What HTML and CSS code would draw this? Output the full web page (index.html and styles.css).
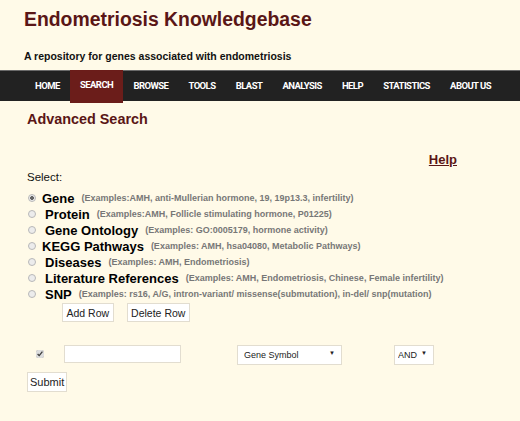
FILE: index.html
```html
<!DOCTYPE html>
<html lang="en">
<head>
    <meta charset="UTF-8">
    <title>Endometriosis Knowledgebase - Advanced Search</title>
    <link rel="stylesheet" href="styles.css">
</head>
<body>
    <!-- Header -->
    <header class="site-header">
        <h1>Endometriosis Knowledgebase</h1>
        <p class="tagline">A repository for genes associated with endometriosis</p>
    </header>

    <!-- Navbar -->
    <nav class="main-nav">
        <ul>
            <li><a href="#">HOME</a></li>
            <li class="active"><a href="#">SEARCH</a></li>
            <li><a href="#">BROWSE</a></li>
            <li><a href="#">TOOLS</a></li>
            <li><a href="#">BLAST</a></li>
            <li><a href="#">ANALYSIS</a></li>
            <li><a href="#">HELP</a></li>
            <li><a href="#">STATISTICS</a></li>
            <li><a href="#">ABOUT US</a></li>
        </ul>
    </nav>

    <!-- Advanced Search -->
    <main class="content">
        <h2>Advanced Search</h2>
        <div class="help-link"><a href="#">Help</a></div>
        <p class="select-label">Select:</p>

        <form class="search-form">
            <ul class="type-list">
                <li><input type="radio" name="type" checked><b>Gene</b><span class="ex">(Examples:AMH, anti-Mullerian hormone, 19, 19p13.3, infertility)</span></li>
                <li><input type="radio" name="type"><b class="pad">Protein</b><span class="ex">(Examples:AMH, Follicle stimulating hormone, P01225)</span></li>
                <li><input type="radio" name="type"><b class="pad">Gene Ontology</b><span class="ex">(Examples: GO:0005179, hormone activity)</span></li>
                <li><input type="radio" name="type"><b>KEGG Pathways</b><span class="ex">(Examples: AMH, hsa04080, Metabolic Pathways)</span></li>
                <li><input type="radio" name="type"><b class="pad">Diseases</b><span class="ex">(Examples: AMH, Endometriosis)</span></li>
                <li><input type="radio" name="type"><b class="pad">Literature References</b><span class="ex">(Examples: AMH, Endometriosis, Chinese, Female infertility)</span></li>
                <li><input type="radio" name="type"><b class="pad">SNP</b><span class="ex">(Examples: rs16, A/G, intron-variant/ missense(submutation), in-del/ snp(mutation)</span></li>
            </ul>

            <div class="row-buttons">
                <button type="button">Add Row</button>
                <button type="button">Delete Row</button>
            </div>

            <div class="query-row">
                <input type="checkbox" class="row-check" checked>
                <input type="text" class="term">
                <span class="select-wrap field">
                    <select>
                        <option>Gene Symbol</option>
                    </select>
                    <span class="arrow">&#9660;</span>
                </span>
                <span class="select-wrap op">
                    <select>
                        <option>AND</option>
                    </select>
                    <span class="arrow">&#9660;</span>
                </span>
            </div>

            <button type="submit" class="submit-btn">Submit</button>
        </form>
    </main>
</body>
</html>
```

FILE: styles.css
```css
/* Reset */
* {
    margin: 0;
    padding: 0;
    box-sizing: border-box;
}

body {
    font-family: 'Liberation Sans', Arial, sans-serif;
    background-color: #fffae8;
    color: #111;
    width: 520px;
    height: 421px;
    overflow: hidden;
}

/* Header */
.site-header {
    padding: 7px 24px 0;
    height: 70px;
}

.site-header h1 {
    font-size: 19.4px;
    font-weight: 700;
    color: #5a1616;
    line-height: 24px;
}

.tagline {
    margin-top: 19px;
    font-size: 10.5px;
    font-weight: 700;
    color: #111;
}

/* Navbar */
.main-nav {
    height: 31px;
    background: #222;
    border-top: 1px solid #6a6a6a;
}

.main-nav ul {
    display: flex;
    list-style: none;
    padding-left: 25px;
    height: 100%;
}

.main-nav li {
    height: 100%;
}

.main-nav li a {
    display: block;
    height: 100%;
    padding: 0 10.1px;
    line-height: 29px;
    font-family: Roboto, sans-serif;
    font-size: 9.5px;
    font-weight: 700;
    letter-spacing: -0.56px;
    color: #fff;
    text-decoration: none;
}

.main-nav li.active a {
    background: #6b1d1a;
    height: 33px;
    margin-top: -1px;
}

/* Content */
.content {
    padding: 0 27px;
}

.content h2 {
    margin-top: 8px;
    font-size: 14.4px;
    font-weight: 700;
    color: #5a1616;
    line-height: 20px;
}

.help-link {
    text-align: right;
    padding-right: 36px;
    margin-top: 21px;
}

.help-link a {
    font-size: 13px;
    font-weight: 700;
    color: #5a1616;
}

.select-label {
    margin-top: 2px;
    font-size: 11.5px;
    line-height: 14px;
}

/* Type list */
.type-list {
    list-style: none;
    margin-top: 6px;
}

.type-list li {
    display: flex;
    align-items: center;
    height: 16px;
    white-space: nowrap;
}

.type-list input[type="radio"] {
    appearance: none;
    width: 8px;
    height: 8px;
    margin: 0 6px 0 1px;
    border: 1px solid #b8b8b8;
    border-radius: 50%;
    background: #ececec;
    flex-shrink: 0;
}

.type-list input[type="radio"]:checked {
    background: radial-gradient(circle, #666 0 1.6px, #ececec 2.2px);
}

.type-list b {
    font-size: 13px;
    color: #000;
}

.type-list b.pad {
    margin-left: 3px;
}

.ex {
    margin-left: 7px;
    font-size: 9px;
    font-weight: 700;
    color: #777;
}

/* Row buttons */
.row-buttons {
    display: flex;
    gap: 13px;
    padding-left: 35px;
    margin-top: 1px;
}

button {
    font-family: 'Liberation Sans', Arial, sans-serif;
    font-size: 10.5px;
    color: #222;
    background: #fff;
    border: 1px solid #e2ddd0;
    height: 19px;
    padding: 0 3.5px;
}

/* Query row */
.query-row {
    display: flex;
    align-items: center;
    margin-top: 22px;
    height: 20px;
}

.row-check {
    width: 8px;
    height: 8px;
    margin: 0 0 0 9px;
    accent-color: #ddd;
}

.term {
    width: 117px;
    height: 18px;
    margin-left: 20px;
    border: 1px solid #e2ddd0;
    background: #fff;
}

.select-wrap {
    position: relative;
    display: inline-block;
}

.select-wrap select {
    appearance: none;
    height: 20px;
    border: 1px solid #e2ddd0;
    background: #fff;
    font-family: 'Liberation Sans', Arial, sans-serif;
    font-size: 9px;
    color: #222;
    padding-left: 6px;
}

.select-wrap .arrow {
    position: absolute;
    right: 7px;
    top: 6px;
    font-size: 6px;
    color: #222;
    pointer-events: none;
}

.field {
    margin-left: 56px;
}

.field select {
    width: 105px;
}

.op {
    margin-left: 52px;
}

.op select {
    width: 40px;
    padding-left: 3px;
}

.submit-btn {
    margin-top: 8px;
    height: 20px;
    padding: 0 2px;
    font-size: 11px;
}
```
